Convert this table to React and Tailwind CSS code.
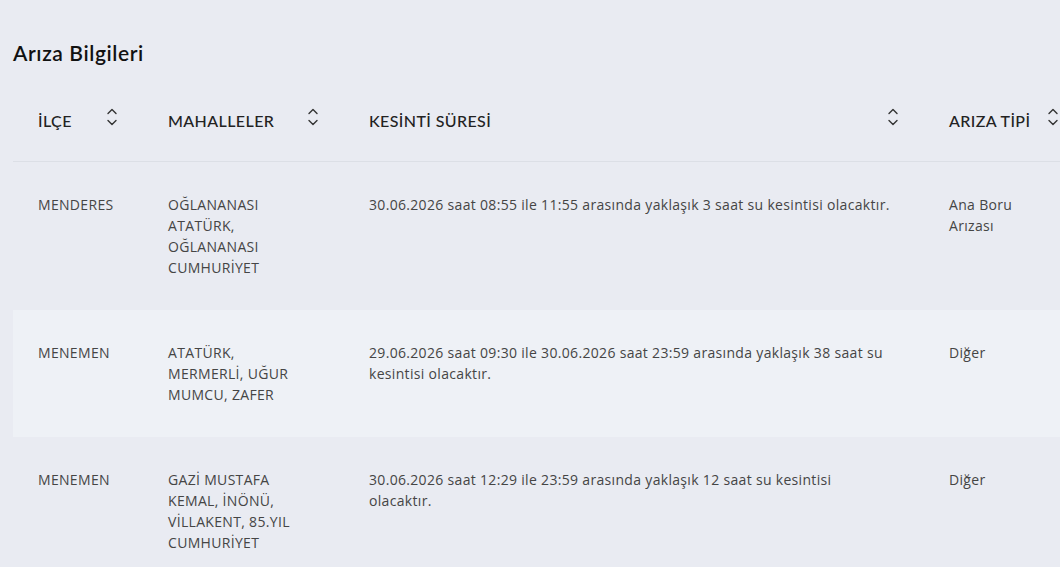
import React from 'react';

const rows = [
  {
    ilce: 'MENDERES',
    mahalleler: 'OĞLANANASI ATATÜRK, OĞLANANASI CUMHURİYET',
    sure: '30.06.2026 saat 08:55 ile 11:55 arasında yaklaşık 3 saat su kesintisi olacaktır.',
    tip: 'Ana Boru Arızası',
  },
  {
    ilce: 'MENEMEN',
    mahalleler: 'ATATÜRK, MERMERLİ, UĞUR MUMCU, ZAFER',
    sure: '29.06.2026 saat 09:30 ile 30.06.2026 saat 23:59 arasında yaklaşık 38 saat su kesintisi olacaktır.',
    tip: 'Diğer',
  },
  {
    ilce: 'MENEMEN',
    mahalleler: 'GAZİ MUSTAFA KEMAL, İNÖNÜ, VİLLAKENT, 85.YIL CUMHURİYET',
    sure: '30.06.2026 saat 12:29 ile 23:59 arasında yaklaşık 12 saat su kesintisi olacaktır.',
    tip: 'Diğer',
  },
];

function SortIcon() {
  return (
    <svg width="12" height="18" viewBox="0 0 12 18" fill="none" stroke="#333" strokeWidth="1.4" strokeLinecap="round" strokeLinejoin="round">
      <path d="M2 5.5 L6 1.5 L10 5.5" />
      <path d="M2 12.5 L6 16.5 L10 12.5" />
    </svg>
  );
}

function HeaderCell({ label, width }) {
  return (
    <th className={`${width} px-[25px] pt-[30px] pb-[30px] text-left font-medium align-middle`}>
      <div className="flex items-center justify-between">
        <span className="text-[16px] leading-[20px] text-[#222] tracking-[0.4px]">{label}</span>
        <span className="-mt-[8px]"><SortIcon /></span>
      </div>
    </th>
  );
}

export default function App() {
  return (
    <div className="min-h-screen w-[1060px] overflow-hidden bg-[#e9ebf2] font-['Lato',sans-serif]">
      <h2 className="pl-[13px] pt-[40px] text-[21px] leading-[26px] font-semibold text-[#111] tracking-[0.6px]">Arıza Bilgileri</h2>
      <div className="pl-[13px] pt-[15px]">
        <table className="w-[1071px] border-collapse">
          <thead>
            <tr className="border-b border-[#dcdfe6]">
              <HeaderCell label="İLÇE" width="w-[130px]" />
              <HeaderCell label="MAHALLELER" width="w-[201px]" />
              <HeaderCell label="KESİNTİ SÜRESİ" width="w-[580px]" />
              <HeaderCell label="ARIZA TİPİ" width="w-[160px]" />
            </tr>
          </thead>
          <tbody className="text-[14px] leading-[21px] text-[#454545] tracking-[0.32px] font-['Open_Sans',sans-serif]">
            {rows.map((r, i) => (
              <tr key={i} className={i % 2 === 1 ? 'bg-[#eef1f6]' : ''}>
                <td className="px-[25px] py-[32px] align-top">{r.ilce}</td>
                <td className="pl-[25px] pr-[41px] py-[32px] align-top">{r.mahalleler}</td>
                <td className="pl-[25px] pr-[32px] py-[32px] align-top">{r.sure}</td>
                <td className="pl-[25px] pr-[60px] py-[32px] align-top">{r.tip}</td>
              </tr>
            ))}
          </tbody>
        </table>
      </div>
    </div>
  );
}
